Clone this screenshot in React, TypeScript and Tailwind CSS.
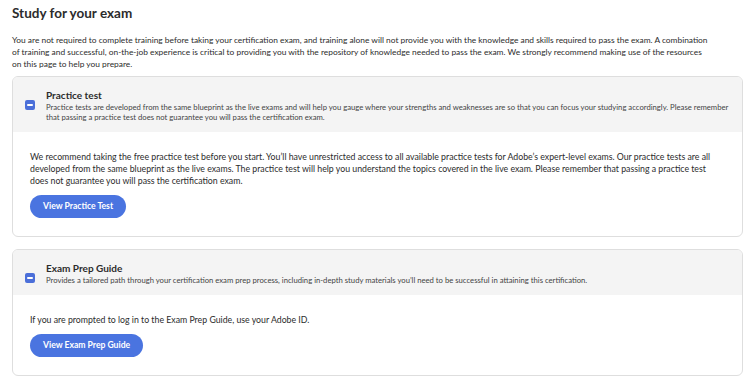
import React from 'react';

interface Resource {
  title: string;
  summary: string;
  body: string;
  action: string;
}

const resources: Resource[] = [
  {
    title: 'Practice test',
    summary:
      'Practice tests are developed from the same blueprint as the live exams and will help you gauge where your strengths and weaknesses are so that you can focus your studying accordingly. Please remember that passing a practice test does not guarantee you will pass the certification exam.',
    body:
      "We recommend taking the free practice test before you start. You\u2019ll have unrestricted access to all available practice tests for Adobe\u2019s expert-level exams. Our practice tests are all developed from the same blueprint as the live exams. The practice test will help you understand the topics covered in the live exam. Please remember that passing a practice test does not guarantee you will pass the certification exam.",
    action: 'View Practice Test',
  },
  {
    title: 'Exam Prep Guide',
    summary:
      "Provides a tailored path through your certification exam prep process, including in-depth study materials you\u2019ll need to be successful in attaining this certification.",
    body: 'If you are prompted to log in to the Exam Prep Guide, use your Adobe ID.',
    action: 'View Exam Prep Guide',
  },
];

function CollapseIcon() {
  return (
    <span className="mt-[12px] flex h-[10px] w-[10px] shrink-0 items-center justify-center rounded-[2px] bg-[#4b6fd9]">
      <span className="h-[2px] w-[6px] rounded-full bg-white" />
    </span>
  );
}

export default function App() {
  return (
    <div
      className="h-[387px] w-[750px] overflow-hidden bg-white px-3 pt-[4px] text-[#2c2c2c]"
      style={{ fontFamily: 'Lato, "Open Sans", sans-serif' }}
    >
      {/* Heading */}
      <h2 className="text-[13.5px] font-bold leading-[18px]">Study for your exam</h2>
      <p className="mt-[12px] w-[700px] text-[8.4px] leading-[12px]">
        You are not required to complete training before taking your certification exam, and training alone will not
        provide you with the knowledge and skills required to pass the exam. A combination of training and successful,
        on-the-job experience is critical to providing you with the repository of knowledge needed to pass the exam. We
        strongly recommend making use of the resources on this page to help you prepare.
      </p>

      {/* Resource cards */}
      <div className="mt-[6px] flex w-[731px] flex-col gap-[12px]">
        {resources.map((r) => (
          <div key={r.title} className="overflow-hidden rounded-[6px] border border-[#dedede] bg-white">
            <div className="flex gap-[11px] bg-[#f4f4f4] pb-[10px] pl-[12px] pr-[2px] pt-[11px]">
              <CollapseIcon />
              <div>
                <h3 className="text-[10px] font-bold leading-[14px]">{r.title}</h3>
                <p className="text-[7.7px] leading-[10px] text-[#444]">{r.summary}</p>
              </div>
            </div>
            <div className="pb-[18px] pl-[17px] pr-[20px] pt-[19px]">
              <p className="text-[8.75px] leading-[12px]">{r.body}</p>
              <button className="mt-[8px] h-[23px] rounded-full bg-[#4a74e0] px-[13px] text-[8.6px] font-bold text-white">
                {r.action}
              </button>
            </div>
          </div>
        ))}
      </div>
    </div>
  );
}
